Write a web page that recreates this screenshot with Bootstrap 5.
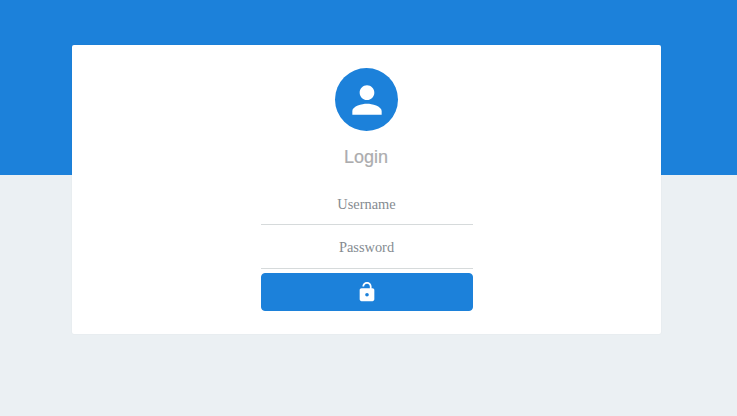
<!DOCTYPE html>
<html lang="en">
<head>
<meta charset="utf-8">
<meta name="viewport" content="width=device-width, initial-scale=1">
<title>Login</title>
<link href="https://cdn.jsdelivr.net/npm/bootstrap@5.3.0/dist/css/bootstrap.min.css" rel="stylesheet">
<style>
:root { --brand: #1c81da; }
body {
  min-height: 100vh;
  padding: 45px 76px 0 72px;
  background: linear-gradient(var(--brand) 175px, #ebf0f3 175px) no-repeat #ebf0f3;
  overflow: hidden;
}
.login-card {
  height: 289px;
  padding-top: 23px;
  border-radius: 2px;
  box-shadow: 0 0 2px rgba(0, 0, 0, .06);
}
.avatar { width: 63px; height: 63px; background: var(--brand); }
.login-title {
  font: 18px/20px "Liberation Sans", Arial, sans-serif;
  color: #acacae;
  -webkit-text-stroke: .2px #acacae;
  margin: 16px 1px 1px 0;
}
.login-form { width: 212px; margin-top: 17px; }
.login-field {
  height: 40px;
  padding: 0;
  font: 14.4px/20px "Liberation Serif", "Times New Roman", serif;
  border-bottom: 1px solid #d6dadb !important;
  margin-bottom: 3px;
}
.login-field.pass { height: 41px; padding-bottom: 2px; margin-bottom: 4px; }
.login-field::placeholder { color: #858b91; opacity: 1; }
.login-btn {
  --bs-btn-bg: var(--brand);
  --bs-btn-border-color: var(--brand);
  --bs-btn-hover-bg: #1976c8;
  --bs-btn-color: #fff;
  height: 38px;
  padding: 0;
  border-radius: 4px;
}
</style>
</head>
<body>
<main class="login-card bg-white d-flex flex-column align-items-center">
  <div class="avatar rounded-circle d-flex align-items-center justify-content-center">
    <svg width="44" height="44" viewBox="0 0 24 24" fill="#fff" aria-hidden="true"><path d="M12 12c2.210 0 4-1.790 4-4s-1.790-4-4-4-4 1.790-4 4 1.790 4 4 4zm0 2c-2.670 0-8 1.340-8 4v2h16v-2c0-2.660-5.330-4-8-4z"/></svg>
  </div>
  <h1 class="login-title">Login</h1>
  <form class="login-form d-flex flex-column">
    <input class="login-field form-control border-0 rounded-0 text-center" type="text" placeholder="Username" aria-label="Username">
    <input class="login-field pass form-control border-0 rounded-0 text-center" type="password" placeholder="Password" aria-label="Password">
    <button class="login-btn btn w-100 d-flex align-items-center justify-content-center" type="button" aria-label="Log in">
      <svg width="22" height="22" viewBox="0 0 24 24" fill="#fff" aria-hidden="true"><path fill-rule="evenodd" d="M12 17a2 2 0 1 0 0-4 2 2 0 0 0 0 4zm6-9h-1V6c0-2.760-2.240-5-5-5S7 3.240 7 6h1.900c0-1.710 1.390-3.100 3.100-3.100s3.100 1.390 3.100 3.100v2H6c-1.100 0-2 .9-2 2v10c0 1.100.9 2 2 2h12c1.100 0 2-.9 2-2V10c0-1.100-.9-2-2-2z"/></svg>
    </button>
  </form>
</main>
<script src="https://cdn.jsdelivr.net/npm/bootstrap@5.3.0/dist/js/bootstrap.bundle.min.js"></script>
</body>
</html>
